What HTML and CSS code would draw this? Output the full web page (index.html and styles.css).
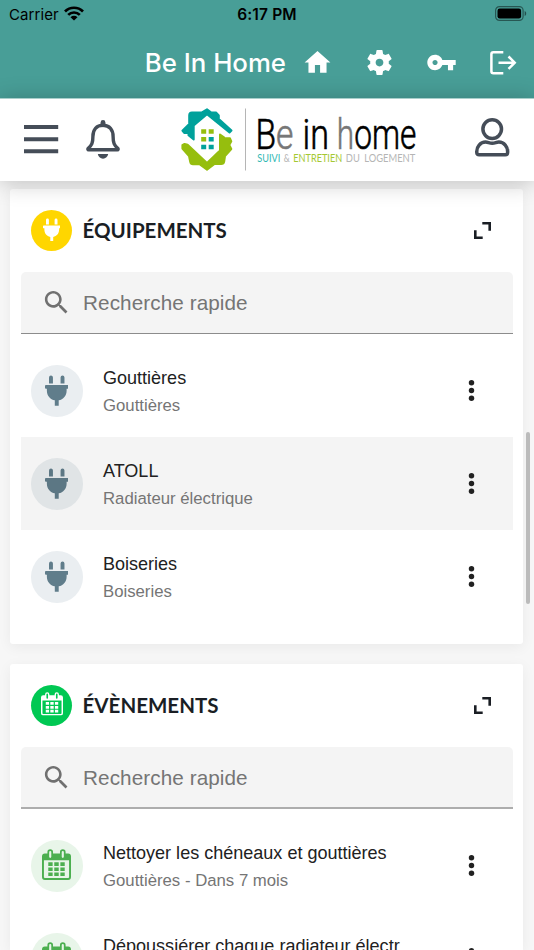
FILE: index.html
```html
<!DOCTYPE html>
<html lang="fr">
<head>
<meta charset="utf-8">
<title>Be In Home</title>
<link rel="stylesheet" href="styles.css">
</head>
<body>
<svg class="defs" aria-hidden="true">
  <symbol id="plug" viewBox="0 0 24 32">
    <path d="M4.100 8.700V2.600a2 2 0 0 1 4 0v6.100zM15.900 8.700V2.600a2 2 0 0 1 4 0v6.100zM.9 10.300h22.200c.6 0 .9.4.9.9v1.900c0 .6-.3.9-.9.9h-1v2c0 5-3.400 8.800-8.100 9.900v5.500h-4v-5.500C5.300 24.800 1.900 21 1.900 16v-2h-1c-.6 0-.9-.3-.9-.9v-1.900c0-.5.3-.9.9-.9z"/>
  </symbol>
  <symbol id="calendar" viewBox="0 0 30 32">
    <path fill-rule="evenodd" d="M3 4.500h2.600V3.100a2.900 2.900 0 0 1 5.800 0v1.400h7.200V3.100a2.900 2.900 0 0 1 5.800 0v1.400H27a3 3 0 0 1 3 3V29a3 3 0 0 1-3 3H3a3 3 0 0 1-3-3V7.500a3 3 0 0 1 3-3zM2 11.500V29a1 1 0 0 0 1 1h24a1 1 0 0 0 1-1V11.500zM8.500 2a1.100 1.100 0 0 0-1.100 1.100v5a1.100 1.100 0 0 0 2.200 0v-5A1.100 1.100 0 0 0 8.500 2zM21.500 2a1.100 1.100 0 0 0-1.100 1.100v5a1.100 1.100 0 0 0 2.200 0v-5A1.100 1.100 0 0 0 21.500 2z"/>
    <path d="M6.500 13.600H11v3.900H6.500zM12.700 13.600h4.600v3.900h-4.600zM19 13.600h4.500v3.900H19zM6.500 19H11v3.700H6.500zM12.700 19h4.600v3.700h-4.600zM19 19h4.500v3.700H19zM6.500 24.200H11V28H6.500zM12.700 24.200h4.600V28h-4.600zM19 24.200h4.500V28H19z"/>
  </symbol>
  <symbol id="search" viewBox="0 0 24 24">
    <path d="M15.500 14h-.79l-.28-.27C15.410 12.590 16 11.110 16 9.500 16 5.910 13.090 3 9.500 3S3 5.910 3 9.500 5.910 16 9.500 16c1.610 0 3.090-.59 4.230-1.570l.27.28v.79l5 4.990L20.490 19l-4.990-5zm-6 0C7.010 14 5 11.990 5 9.500S7.010 5 9.500 5 14 7.010 14 9.500 11.990 14 9.500 14z"/>
  </symbol>
  <symbol id="more" viewBox="0 0 24 24">
    <circle cx="12" cy="6" r="2.100"/><circle cx="12" cy="12" r="2.100"/><circle cx="12" cy="18" r="2.100"/>
  </symbol>
  <symbol id="expand" viewBox="0 0 17 17">
    <path d="M8.300 1.300h7.400v7.400M1.300 8.300v7.400h7.400" fill="none" stroke="currentColor" stroke-width="2.600"/>
  </symbol>
</svg>

<header class="app-top">
  <div class="status">
    <div class="carrier"><span>Carrier</span>
      <svg class="wifi" viewBox="0 0 20 15"><g fill="none" stroke="#000" stroke-width="2.700"><path d="M1 5.500a12.700 12.700 0 0 1 18 0"/><path d="M4.200 8.900a8.200 8.200 0 0 1 11.600 0"/></g><path d="M10 14.600 6.500 11.200a5 5 0 0 1 7 0z"/></svg>
    </div>
    <div class="clock">6:17 PM</div>
    <svg class="battery" viewBox="0 0 32 15"><rect x=".6" y=".6" width="27.500" height="13.800" rx="3.800" fill="none" stroke="#000" stroke-opacity=".45" stroke-width="1.200"/><rect x="2.500" y="2.500" width="23.600" height="10" rx="2.200"/><path d="M29.700 5c2 .8 2 4.200 0 5z" opacity=".5"/></svg>
  </div>
  <div class="toolbar">
    <h1>Be In Home</h1>
    <svg viewBox="0 0 24 24"><path d="M10 20v-6h4v6h5v-8h3L12 3 2 12h3v8z"/></svg>
    <svg viewBox="0 0 24 24"><path d="M19.140 12.940c.04-.3.060-.61.060-.94 0-.32-.02-.64-.07-.94l2.030-1.580c.18-.14.23-.41.120-.61l-1.920-3.320c-.12-.22-.37-.29-.59-.22l-2.390.96c-.5-.38-1.030-.7-1.620-.94l-.36-2.540c-.04-.24-.24-.41-.48-.41h-3.840c-.24 0-.43.17-.47.41l-.36 2.540c-.59.24-1.130.57-1.620.94l-2.390-.96c-.22-.08-.47 0-.59.22L2.740 8.870c-.12.21-.08.47.12.61l2.030 1.580c-.05.3-.09.63-.09.94s.02.64.07.94l-2.030 1.580c-.18.14-.23.41-.12.61l1.920 3.320c.12.22.37.29.59.22l2.390-.96c.5.38 1.030.7 1.620.94l.36 2.540c.05.24.24.41.48.41h3.840c.24 0 .44-.17.47-.41l.36-2.540c.59-.24 1.130-.56 1.620-.94l2.390.96c.22.08.47 0 .59-.22l1.920-3.320c.12-.22.07-.47-.12-.61l-2.010-1.580zM12 15c-1.700 0-3-1.300-3-3s1.300-3 3-3 3 1.300 3 3-1.300 3-3 3z"/></svg>
    <svg viewBox="0 0 24 24"><path d="M12.650 10C11.830 7.670 9.610 6 7 6c-3.310 0-6 2.690-6 6s2.690 6 6 6c2.610 0 4.830-1.670 5.650-4H17v4h4v-4h2v-4H12.650zM7 14c-1.100 0-2-.9-2-2s.9-2 2-2 2 .9 2 2-.9 2-2 2z"/></svg>
    <svg viewBox="0 0 31 31"><path d="M15.300 5.200H5.400a2 2 0 0 0-2 2v17a2 2 0 0 0 2 2h9.900M10.500 15.700h16M20.500 9.500l6.200 6.200-6.200 6.200" fill="none" stroke="#fff" stroke-width="2.500"/></svg>
  </div>
</header>

<nav class="nav">
  <svg class="menu" viewBox="0 0 35 29"><path d="M0 2.100h34.200M0 14.200h34.200M0 26.300h34.200" stroke="#454d58" stroke-width="4"/></svg>
  <svg class="bell" viewBox="0 0 34 39"><path d="M17 5.300c-6.500 0-10.100 4.500-10.100 11.200 0 6.500-1.100 8.700-4.600 11.700-.7.700-.5 1.600.4 1.600h28.600c.9 0 1.100-.9.400-1.600-3.500-3-4.600-5.200-4.600-11.700C27.100 9.800 23.500 5.300 17 5.300z" fill="none" stroke="#454d58" stroke-width="3.400"/><path d="M17 2.400v2.400" stroke="#454d58" stroke-width="4.800" stroke-linecap="round"/><path d="M11.800 34.100h10.400c-.4 2.700-2.500 4.700-5.200 4.700s-4.800-2-5.200-4.700z" fill="#454d58"/></svg>
  <svg class="brand" viewBox="180 106 240 68">
    <path fill="#00a19b" stroke="#00a19b" stroke-width="2" stroke-linejoin="round" d="M207 109.300 211.300 112.500H216l2.800 3v3.400L231.500 130.600 229.500 132.500 207 114.200 193.700 125.500v14L188.500 135.200V133h-4.300l-1.800-2.300 6.800-6.700v-8.500q0-3 2.800-3h9.500z"/>
    <path fill="#96be0e" stroke="#96be0e" stroke-width="2" stroke-linejoin="round" d="M207 169.700 199.500 164.300H193q-2.300 0-2.800-2.500l-1.200-5.800-6.600-7.500v-3.300l2.200-1.300 3 .8L207 163 220 150.500V134.500l4 2.800v1h6l1.300 3-2 3.700 2 4L225 156l-.8 5.500q-.5 2.500-3 2.500h-6.700z"/>
    <path fill="#96be0e" d="M201.200 129.200h5v4.500h-5zM208.700 129.200h5v4.500h-5zM201.200 137h5v4.500h-5z"/>
    <path fill="#00a19b" d="M208.700 137h5v4.500h-5zM201.200 144.800h5v4.500h-5zM208.700 144.800h5v4.500h-5z"/>
    <path d="M245.500 108.500v62" stroke="#b5b5b5"/>
    <g class="wordmark">
      <text x="255.500" y="148.500" textLength="38" lengthAdjust="spacingAndGlyphs">B<tspan class="soft">e</tspan></text>
      <text x="302.500" y="148.500" textLength="26.500" lengthAdjust="spacingAndGlyphs">in</text>
      <text x="336.800" y="148.500" textLength="79.500" lengthAdjust="spacingAndGlyphs"><tspan class="soft">h</tspan>ome</text>
    </g>
    <g class="tagline">
      <text x="257.300" y="161.700" class="teal" textLength="23" lengthAdjust="spacingAndGlyphs">SUIVI</text>
      <text x="283.800" y="161.700" textLength="6" lengthAdjust="spacingAndGlyphs">&amp;</text>
      <text x="293.200" y="161.700" class="lime" textLength="49" lengthAdjust="spacingAndGlyphs">ENTRETIEN</text>
      <text x="345.800" y="161.700" textLength="14" lengthAdjust="spacingAndGlyphs">DU</text>
      <text x="364.300" y="161.700" textLength="51" lengthAdjust="spacingAndGlyphs">LOGEMENT</text>
    </g>
  </svg>
  <svg class="user" viewBox="0 0 35 39"><g fill="none" stroke="#454d58" stroke-width="3.500"><circle cx="17.200" cy="11.100" r="9.300"/><path d="M1.800 34.500c-.5-5.700 3.800-10.400 8.700-10.400 2.500 0 3.800 1.200 6.700 1.200s4.200-1.200 6.700-1.200c4.900 0 9.200 4.700 8.700 10.400 0 1.500-.8 2.300-2.300 2.300H4.100c-1.500 0-2.300-.8-2.300-2.300z"/></g></svg>
</nav>

<main>
  <section class="card">
    <div class="head"><span class="dot yellow"><svg class="i-plug"><use href="#plug"/></svg></span><h2>ÉQUIPEMENTS</h2><svg class="expand"><use href="#expand"/></svg></div>
    <div class="search"><svg><use href="#search"/></svg><span>Recherche rapide</span></div>
    <ul>
      <li><span class="avatar"><svg class="i-plug"><use href="#plug"/></svg></span><div class="txt"><b>Gouttières</b><small>Gouttières</small></div><svg class="more"><use href="#more"/></svg></li>
      <li class="active"><span class="avatar"><svg class="i-plug"><use href="#plug"/></svg></span><div class="txt"><b>ATOLL</b><small>Radiateur électrique</small></div><svg class="more"><use href="#more"/></svg></li>
      <li><span class="avatar"><svg class="i-plug"><use href="#plug"/></svg></span><div class="txt"><b>Boiseries</b><small>Boiseries</small></div><svg class="more"><use href="#more"/></svg></li>
    </ul>
  </section>
  <section class="card events">
    <div class="head"><span class="dot green"><svg class="i-cal"><use href="#calendar"/></svg></span><h2>ÉVÈNEMENTS</h2><svg class="expand"><use href="#expand"/></svg></div>
    <div class="search"><svg><use href="#search"/></svg><span>Recherche rapide</span></div>
    <ul>
      <li><span class="avatar"><svg class="i-cal"><use href="#calendar"/></svg></span><div class="txt"><b>Nettoyer les chéneaux et gouttières</b><small>Gouttières - Dans 7 mois</small></div><svg class="more"><use href="#more"/></svg></li>
      <li><span class="avatar"><svg class="i-cal"><use href="#calendar"/></svg></span><div class="txt"><b>Dépoussiérer chaque radiateur électr</b></div><svg class="more"><use href="#more"/></svg></li>
    </ul>
  </section>
</main>
<div class="scrollbar"></div>
</body>
</html>
```
FILE: styles.css
```css
* { box-sizing: border-box; }
html, body { height: 950px; overflow: hidden; }
body { margin: 0; background: #f7f7f7; font-family: "Liberation Sans", sans-serif; display: flex; flex-direction: column; position: relative; }
svg { display: block; flex: none; }
.defs { position: absolute; width: 0; height: 0; }

.app-top { height: 98px; flex: none; background: #489e97; font-family: Inter, sans-serif; }
.status { height: 28px; display: grid; grid-template-columns: 1fr auto 1fr; align-items: center; padding: 0 7px 0 9px; font-size: 15px; }
.carrier { display: flex; align-items: center; gap: 5px; letter-spacing: .1px; }
.wifi { width: 20px; height: 15px; margin-top: -2px; }
.clock { font-weight: 600; font-size: 15.500px; letter-spacing: .15px; margin-left: -2px; }
.battery { width: 32px; height: 15px; justify-self: end; margin-top: -1px; }
.toolbar { height: 69px; display: flex; align-items: center; justify-content: flex-end; gap: 31px; padding-right: 15px; color: #fff; fill: #fff; }
.toolbar svg { width: 31px; height: 31px; }
.toolbar h1 { margin: -1px -15px 0 0; font-size: 25.800px; font-weight: 500; line-height: 31px; white-space: nowrap; }

.nav { height: 83px; flex: none; background: #fff; border-top: 1px solid #a9cfcb; display: flex; align-items: center; padding: 0 24px; position: relative; z-index: 2; box-shadow: 0 2px 22px rgba(0,0,0,.24); }
.menu { width: 35px; height: 29px; margin-top: -2px; }
.bell { width: 34px; height: 39px; margin: -2px 0 0 27px; }
.brand { width: 240px; height: 68px; margin-left: 60px; }
.wordmark { font: 300 42px Roboto, sans-serif; stroke: #000; stroke-width: .6px; }
.wordmark .soft { fill: #777; stroke: #777; }
.tagline { font: 400 10.500px Lato, sans-serif; fill: #b5b5b5; }
.tagline .teal { fill: #32b9b4; }
.tagline .lime { fill: #a5c832; }
.user { width: 35px; height: 39px; margin: -6px 0 0 auto; }

main { padding: 8px 11px 0 10.300px; flex: 1; min-height: 0; overflow: hidden; display: flex; flex-direction: column; gap: 20.500px; }
.card { height: 454.500px; flex: none; background: #fff; border-radius: 3px; padding: 0 10.300px; box-shadow: 0 3px 14px rgba(0,0,0,.06); }
.events { height: 286px; overflow: hidden; border-radius: 3px 3px 0 0; }
.head { height: 83px; display: flex; align-items: center; padding: 0 22px 0 10.300px; color: #1a1e24; }
.dot { width: 41.400px; height: 41.400px; border-radius: 50%; display: grid; place-items: center; fill: #fff; }
.yellow { background: #ffd600; }
.green { background: #00c853; }
.dot .i-plug { width: 17.500px; height: 23.500px; margin-top: -2px; }
.dot .i-cal { width: 22px; height: 23.500px; margin-top: -3px; }
.head h2 { margin: -1px auto 0 10.300px; font: 700 20.500px/26px Lato, sans-serif; }
.expand { width: 17px; height: 17px; }
.search { height: 62px; background: #f4f4f4; border-bottom: 1.500px solid #8c8c8c; border-radius: 5px 5px 0 0; display: flex; align-items: center; gap: 11px; padding-left: 20.500px; color: #757575; font-size: 20.700px; letter-spacing: .08px; }
.search span { padding-top: 1px; }
.search svg { width: 31px; height: 31px; fill: #707070; }
.events .search { border-bottom: 2px solid #adadad; }
ul { list-style: none; margin: 10.300px 0 0; padding: 0; }
li { height: 93px; display: flex; align-items: center; padding: 0 25.500px 0 10.300px; }
.active { background: #f4f4f4; }
.avatar { width: 51.700px; height: 51.700px; border-radius: 50%; display: grid; place-items: center; flex: none; background: #eaeef1; fill: #607d8b; }
.active .avatar { background: #e0e4e6; fill: #5c7784; }
.avatar .i-plug { width: 23.500px; height: 31.300px; }
.events .avatar { background: #e8f5e9; fill: #4caf50; }
.avatar .i-cal { width: 29px; height: 31px; margin-top: -2px; }
.txt { margin-left: 20.400px; flex: 1; min-width: 0; height: 54px; padding-top: 1px; display: flex; flex-direction: column; white-space: nowrap; }
.txt b { font-weight: 400; font-size: 18.050px; line-height: 27.500px; color: #212121; }
.txt small { font-size: 16.750px; line-height: 27px; color: #757575; }
.more { width: 31px; height: 31px; fill: #212121; }
.scrollbar { position: absolute; z-index: 3; left: 526px; top: 432px; width: 4px; height: 172px; border-radius: 2px; background: #bbb; }
```
